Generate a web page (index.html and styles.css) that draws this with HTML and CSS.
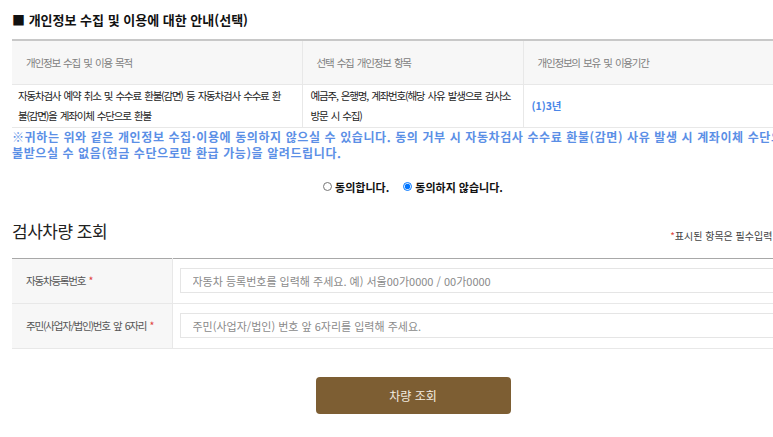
FILE: index.html
```html
<!DOCTYPE html>
<html lang="ko">

<head>
    <meta charset="UTF-8">
    <meta name="viewport" content="width=device-width, initial-scale=1.0">
    <title>검사차량 조회</title>
    <link rel="stylesheet" href="styles.css">
</head>

<body>
    <div class="page">
        <div class="inner">
            <!-- 개인정보 안내 -->
            <h3 class="sec_title">■ 개인정보 수집 및 이용에 대한 안내(선택)</h3>
            <table class="info" cellpadding="0" cellspacing="0">
                <colgroup>
                    <col style="width: 290px;">
                    <col style="width: 221px;">
                    <col>
                </colgroup>
                <thead>
                    <tr>
                        <th>개인정보 수집 및 이용 목적</th>
                        <th>선택 수집 개인정보 항목</th>
                        <th>개인정보의 보유 및 이용기간</th>
                    </tr>
                </thead>
                <tbody>
                    <tr>
                        <td>자동차검사 예약 취소 및 수수료 환불(감면) 등 자동차검사 수수료 환불(감면)을 계좌이체 수단으로 환불</td>
                        <td>예금주, 은행명, 계좌번호(해당 사유 발생으로 검사소 방문 시 수집)</td>
                        <td class="period">(1)3년</td>
                    </tr>
                </tbody>
            </table>
            <p class="notice">※귀하는 위와 같은 개인정보 수집·이용에 동의하지 않으실 수 있습니다. 동의 거부 시 자동차검사 수수료 환불(감면) 사유 발생 시 계좌이체 수단으로 환불받으실 수 없음(현금 수단으로만 환급 가능)을 알려드립니다.</p>
            <div class="agree">
                <label><input type="radio" name="agree"> 동의합니다.</label>
                <label><input type="radio" name="agree" checked> 동의하지 않습니다.</label>
            </div>

            <!-- 검사차량 조회 -->
            <div class="search_head">
                <h2>검사차량 조회</h2>
                <span class="req"><em>*</em>표시된 항목은 필수입력 항목입니다.</span>
            </div>
            <table class="form" cellpadding="0" cellspacing="0">
                <tr>
                    <th>자동차등록번호 <em>*</em></th>
                    <td><input type="text" placeholder="자동차 등록번호를 입력해 주세요. 예) 서울00가0000 / 00가0000"></td>
                </tr>
                <tr>
                    <th>주민(사업자/법인)번호 앞 6자리 <em>*</em></th>
                    <td><input type="text" placeholder="주민(사업자/법인) 번호 앞 6자리를 입력해 주세요."></td>
                </tr>
            </table>
            <div class="btns">
                <button type="button">차량 조회</button>
            </div>
        </div>
    </div>
</body>

</html>
```

FILE: styles.css
```css
* {
    margin: 0;
    padding: 0;
    box-sizing: border-box;
}

body {
    font-family: "Noto Sans CJK KR", "Noto Sans", sans-serif;
    font-size: 11px;
    color: #333;
    background: #fff;
}

.page {
    overflow: hidden;
}

.inner {
    width: 802px;
    margin-left: 12px;
    padding-top: 11px;
}

/* 1 */

.sec_title {
    font-size: 13px;
    line-height: 18px;
    font-weight: bold;
    color: #111;
    margin-bottom: 10px;
}

table {
    width: 100%;
    border-collapse: collapse;
    table-layout: fixed;
}

.info {
    border-top: 2px solid #c8c8c8;
}

.info th,
.info td,
.form th {
    font-size: 10.5px;
    letter-spacing: -1.2px;
    word-spacing: 1.5px;
}

.info th {
    height: 44px;
    background-color: #f7f7f7;
    font-weight: normal;
    color: #808080;
    text-align: left;
    padding-left: 14px;
    border-bottom: 1px solid #e8e8e8;
    border-left: 1px solid #e8e8e8;
}

.info td {
    height: 42px;
    line-height: 20px;
    padding: 1px 6px 1px 8px;
    vertical-align: middle;
    color: #222;
    border-bottom: 1px solid #e8e8e8;
    border-left: 1px solid #e8e8e8;
    word-break: break-all;
}

.info th:first-child,
.info td:first-child {
    border-left: 0;
}

.info td:first-child {
    padding-left: 6px;
    padding-right: 18px;
}

.info .period {
    color: #4a86e8;
    font-weight: bold;
    letter-spacing: 0;
}

.notice {
    margin-top: 1px;
    font-size: 12px;
    line-height: 16px;
    font-weight: bold;
    letter-spacing: 0.6px;
    color: #5b8fe6;
    word-break: break-all;
}

.agree {
    display: flex;
    justify-content: center;
    gap: 14px;
    margin-top: 16px;
    height: 20px;
    align-items: center;
}

.agree label {
    display: flex;
    align-items: center;
    gap: 3px;
    font-weight: bold;
    color: #111;
}

.agree input {
    width: 9px;
    height: 9px;
    margin: 0;
}

/* 2 */

.search_head {
    display: flex;
    justify-content: space-between;
    align-items: flex-end;
    margin-top: 21px;
}

.search_head h2 {
    font-size: 17px;
    line-height: 26px;
    font-weight: normal;
    letter-spacing: -0.5px;
    color: #222;
}

.req {
    font-size: 10px;
    color: #444;
    margin-bottom: 1px;
    margin-right: -10px;
}

.req em,
.form em {
    font-style: normal;
    color: #e0443c;
}

.form {
    margin-top: 14px;
    border-top: 1px solid #a8a8a8;
}

.form th {
    width: 160px;
    height: 45px;
    background-color: #f7f7f7;
    font-weight: normal;
    color: #555;
    text-align: left;
    padding-left: 14px;
    white-space: nowrap;
    border-bottom: 1px solid #e8e8e8;
    border-right: 1px solid #e8e8e8;
}

.form td {
    padding-left: 7px;
    border-bottom: 1px solid #e8e8e8;
}

.form input {
    display: block;
    width: 100%;
    height: 25px;
    border: 1px solid #e5e5e5;
    padding-left: 12px;
    font-family: inherit;
    font-size: 11px;
    color: #333;
}

.form input::placeholder {
    color: #8a8a8a;
}

.btns {
    display: flex;
    justify-content: center;
    margin-top: 28px;
}

.btns button {
    width: 195px;
    height: 37px;
    border: 0;
    border-radius: 4px;
    background-color: #7d5e33;
    color: #f3ece1;
    font-family: inherit;
    font-size: 12px;
}
```
